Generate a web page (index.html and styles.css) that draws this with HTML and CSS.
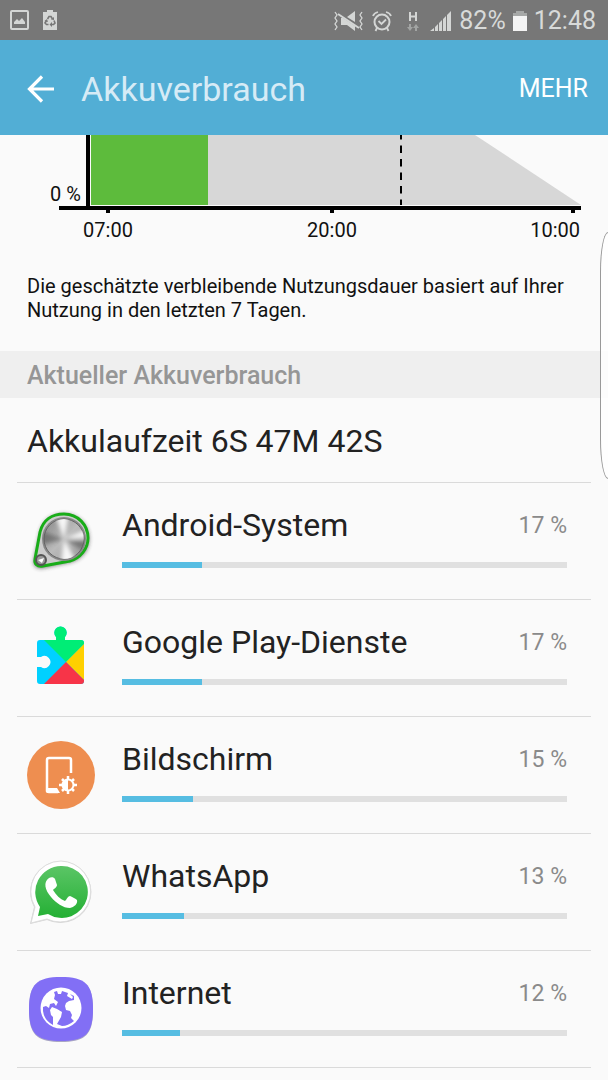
FILE: index.html
```html
<!DOCTYPE html>
<html lang="de">
<head>
    <meta charset="UTF-8">
    <meta name="viewport" content="width=device-width, initial-scale=1.0">
    <title>Akkuverbrauch</title>
    <link rel="stylesheet" href="styles.css">
</head>
<body>
    <div class="status-bar">
        <div class="status-left">
            <svg width="20" height="20" viewBox="0 0 20 20">
                <rect x="1" y="1" width="17" height="18" rx="1" fill="none" stroke="#d4d6d5" stroke-width="2"/>
                <path d="M4 14 V12 L7 9 L9 11 L12 8 L15 12 V14 Z" fill="#d4d6d5"/>
            </svg>
            <svg width="14" height="20" viewBox="0 0 14 20">
                <path d="M0 2 H4 V0 H10 V2 H14 V20 H0 Z" fill="#d4d6d5"/>
                <path d="M4.5 9 L6 6.5 H8 L9.5 9 M11 10.5 L12 13 L10.5 14.5 H8 M5.5 14.5 H3.5 L2 13 L3.5 10.5" fill="none" stroke="#777" stroke-width="1.6"/>
                <path d="M8 9.5 L11 10 L11 7 Z M9 12 V17 L6.5 14.5 Z M1.5 11 L4 9 L5 12 Z" fill="#777"/>
            </svg>
        </div>
        <div class="status-right">
            <svg width="32" height="22" viewBox="0 0 32 22">
                <path d="M2 2 L4 5 L2 8 L4 11 L2 14 L4 17 L2 20 M29 2 L27 5 L29 8 L27 11 L29 14 L27 17 L29 20" fill="none" stroke="#d4d6d5" stroke-width="1.3"/>
                <path d="M5 4 L26 18" stroke="#d4d6d5" stroke-width="2"/>
                <path d="M8 8 L10 8 L22 16 V21 L14 15 H8 Z M14 7 L22 1 V12 Z" fill="#d4d6d5"/>
            </svg>
            <svg width="20" height="22" viewBox="0 0 20 22">
                <circle cx="10" cy="12" r="7.5" fill="none" stroke="#d4d6d5" stroke-width="2"/>
                <path d="M6.5 11 L9.5 14 L14 9.5 M1 6 Q2 3 6 2 M19 6 Q18 3 14 2 M5 18 L3.5 21 M15 18 L16.5 21" fill="none" stroke="#d4d6d5" stroke-width="1.8"/>
            </svg>
            <svg class="network" width="12" height="22" viewBox="0 0 12 22">
                <path d="M3 2 V11 M9 2 V11 M3 6.5 H9" stroke="#d4d6d5" stroke-width="2" fill="none"/>
                <path d="M2 14 H4 V17 H6 L3 21 L0 17 H2 Z M8 21 H10 V18 H12 L9 14 L6 18 H8 Z" fill="#a2a4a3"/>
            </svg>
            <svg class="signal" width="22" height="22" viewBox="0 0 22 22">
                <path d="M0 21 L4 18 V21 Z M5 17 L8 14 V21 H5 Z M9 13 L12 10 V21 H9 Z M13 9 L16 6 V21 H13 Z M17 5 L21 1 V21 H17 Z" fill="#d4d6d5"/>
            </svg>
            <span class="battery-text">82%</span>
            <svg width="14" height="22" viewBox="0 0 14 22">
                <path d="M0 3 H3 V1 H11 V3 H14 V6 H0 Z" fill="#a6a8a7"/>
                <rect y="6" width="14" height="15" fill="#f4f4f4"/>
            </svg>
            <span class="clock">12:48</span>
        </div>
    </div>

    <header class="action-bar">
        <button class="back" type="button" aria-label="Zurück">
            <svg width="28" height="28" viewBox="0 0 28 28">
                <path d="M27 14 H3 M15 1.5 L2.5 14 L15 26.5" fill="none" stroke="#fff" stroke-width="3.2"/>
            </svg>
        </button>
        <h1>Akkuverbrauch</h1>
        <button class="more" type="button">MEHR</button>
    </header>

    <main>
        <svg class="chart" viewBox="0 0 608 110">
            <path d="M208 0 H475 L581 70 H208 Z" fill="#d7d7d7"/>
            <rect x="91" y="0" width="117" height="70" fill="#5dbb3c"/>
            <path d="M401 -3 V70" stroke="#000" stroke-width="2" stroke-dasharray="7.5 6"/>
            <rect x="86" y="0" width="4" height="72" fill="#000"/>
            <rect x="59" y="71" width="522" height="4" fill="#000"/>
            <path d="M106 75 h4 v3 h-4 Z M330 75 h4 v3 h-4 Z M571 75 h4 v3 h-4 Z" fill="#000"/>
            <text x="50" y="66">0 %</text>
            <text x="108" y="102" text-anchor="middle">07:00</text>
            <text x="332" y="102" text-anchor="middle">20:00</text>
            <text x="580" y="102" text-anchor="end">10:00</text>
        </svg>
        <p class="hint">Die geschätzte verbleibende Nutzungsdauer basiert auf Ihrer Nutzung in den letzten 7 Tagen.</p>

        <h2>Aktueller Akkuverbrauch</h2>
        <p class="runtime">Akkulaufzeit 6S 47M 42S</p>

        <ul class="apps">
            <li>
                <svg class="icon" width="68" height="68" viewBox="0 0 68 68">
                    <defs>
                        <linearGradient id="metal" x1="0" y1="0" x2="1" y2="1">
                            <stop offset="0" stop-color="#888"/>
                            <stop offset="0.5" stop-color="#bbb"/>
                            <stop offset="1" stop-color="#999"/>
                        </linearGradient>
                        <filter id="soft" x="-20%" y="-20%" width="140%" height="140%">
                            <feGaussianBlur stdDeviation="2"/>
                        </filter>
                        <clipPath id="knob">
                            <circle cx="37" cy="32" r="20"/>
                        </clipPath>
                    </defs>
                    <path d="M13 26 C16 13 25 7 37 7 C51 7 62 18 62 32 C62 44 54 52 44 55 L16 61 C9 62 6 58 7 53 Z" fill="#333" opacity="0.7" filter="url(#soft)"/>
                    <path d="M13 25 C16 13 25 7 37 7 C51 7 61 18 61 31 C61 42 53 51 43 54 L16 59 C10 60 7 57 8 52 Z" fill="#ccc" stroke="#18ad18" stroke-width="3"/>
                    <circle cx="37" cy="32" r="22" fill="#888"/>
                    <circle cx="37" cy="32" r="20" fill="url(#metal)" stroke="#666"/>
                    <g clip-path="url(#knob)">
                        <g filter="url(#soft)">
                            <path d="M37 32 L28 8 H42 Z M37 32 L34 56 H50 Z M37 32 L60 22 V31 Z" fill="#fff" opacity="0.9"/>
                            <path d="M37 32 L14 24 V38 Z M37 32 L60 34 V46 Z" fill="#555" opacity="0.6"/>
                        </g>
                    </g>
                    <circle cx="14" cy="53" r="5" fill="#999" stroke="#555" stroke-width="2"/>
                    <path d="M11 53 L17 51 L15 56 Z" fill="#fff"/>
                </svg>
                <div class="info">
                    <div class="line"><span class="name" id="app1">Android-System</span><span class="percent">17 %</span></div>
                    <progress value="18" max="100" aria-labelledby="app1"></progress>
                </div>
            </li>
            <li>
                <svg class="icon" width="68" height="68" viewBox="0 0 68 68">
                    <clipPath id="puzzle">
                        <path d="M13 16 H29 V13 A6.2 6.2 0 1 1 38 13 V16 H54 Q57 16 57 19 V57 Q57 60 54 60 H13 Q10 60 10 57 V43 H14 A6 6 0 1 0 14 33 H10 V19 Q10 16 13 16 Z"/>
                    </clipPath>
                    <g clip-path="url(#puzzle)">
                        <rect width="68" height="68" fill="#00d1ff"/>
                        <path d="M0 -1 H78 L39 38 Z" fill="#00ed76"/>
                        <path d="M68 9 L39 38 L68 67 Z" fill="#ffd000"/>
                        <path d="M39 38 L68 67 H10 Z" fill="#f73448"/>
                    </g>
                </svg>
                <div class="info">
                    <div class="line"><span class="name" id="app2">Google Play-Dienste</span><span class="percent">17 %</span></div>
                    <progress value="18" max="100" aria-labelledby="app2"></progress>
                </div>
            </li>
            <li>
                <svg class="icon" width="68" height="68" viewBox="0 0 68 68">
                    <circle cx="34" cy="34" r="34" fill="#ee8e50"/>
                    <path d="M44 32 V19 Q44 17 42 17 H22 Q20 17 20 19 V50 Q20 51 22 51 H31" fill="none" stroke="#fff" stroke-width="2.5"/>
                    <path d="M20 47 H30 L33 52 H22 Q20 52 20 50 Z" fill="#fff"/>
                    <circle cx="41" cy="44" r="5.5" fill="none" stroke="#fff" stroke-width="2"/>
                    <path d="M41 38 A6 6 0 0 0 41 50 Z" fill="#fff"/>
                    <path d="M41 35 V38 M41 50 V53 M32 44 H35 M47 44 H50 M35 38 L37 40 M45 48 L47 50 M35 50 L37 48 M45 40 L47 38" stroke="#fff" stroke-width="2.5"/>
                </svg>
                <div class="info">
                    <div class="line"><span class="name" id="app3">Bildschirm</span><span class="percent">15 %</span></div>
                    <progress value="16" max="100" aria-labelledby="app3"></progress>
                </div>
            </li>
            <li>
                <svg class="icon" width="68" height="68" viewBox="0 0 68 68">
                    <defs>
                        <linearGradient id="green" x1="0" y1="0" x2="0" y2="1">
                            <stop offset="0" stop-color="#5bc566"/>
                            <stop offset="1" stop-color="#24b034"/>
                        </linearGradient>
                    </defs>
                    <path d="M34 3 A31 31 0 1 1 20 62 L3 66 L7 49 A31 31 0 0 1 34 3 Z" fill="#bbb" opacity="0.6"/>
                    <path d="M34 3 A30.5 30.5 0 1 1 20 61 L4 65 L8 49 A30.5 30.5 0 0 1 34 3 Z" fill="#fff" stroke="#ddd"/>
                    <path d="M34 8 A26 26 0 1 1 21 56 L11 58 L13 49 A26 26 0 0 1 34 8 Z" fill="url(#green)"/>
                    <path d="M22 20 C24 19 27 19 28 21 L30 27 C30 29 27 31 26 32 C29 37 33 41 38 43 C40 41 41 38 43 38 C45 39 48 40 50 42 C51 46 47 49 43 50 C36 50 29 45 24 39 C18 32 16 24 22 20 Z" fill="#fff"/>
                </svg>
                <div class="info">
                    <div class="line"><span class="name" id="app4">WhatsApp</span><span class="percent">13 %</span></div>
                    <progress value="14" max="100" aria-labelledby="app4"></progress>
                </div>
            </li>
            <li>
                <svg class="icon" width="68" height="68" viewBox="0 0 68 68">
                    <path d="M34 3 C58 3 66 9 66 35 C66 60 58 67 34 67 C10 67 2 60 2 35 C2 9 10 3 34 3 Z" fill="#a9a6c4"/>
                    <path d="M34 2 C58 2 66 9 66 34 C66 59 58 66 34 66 C10 66 2 59 2 34 C2 9 10 2 34 2 Z" fill="#826ff5"/>
                    <circle cx="34" cy="33" r="20.5" fill="#fff"/>
                    <path d="M16 32 L19 31 L22 33 L23 29 L27 28 L29 31 L31 27 L27 24 L28 20 L27 17 L30 16 L31 19 L34 19 L35 16 L41 18 L40 21 L45 24 L46 22 L43 19 L47 21 L47 25 L42 26 L39 28 L38 31 L39 35 L43 36 L45 40 L44 43 L47 46 Q41 51 35 51 L30 49 L34 42 L35 37 L30 34 L25 32 L23 35 L24 40 L26 42 L26 50 Q17 45 16 36 Z" fill="#826ff5"/>
                </svg>
                <div class="info">
                    <div class="line"><span class="name" id="app5">Internet</span><span class="percent">12 %</span></div>
                    <progress value="13" max="100" aria-labelledby="app5"></progress>
                </div>
            </li>
        </ul>
    </main>

    <div class="edge-handle"></div>
</body>
</html>
```
FILE: styles.css
```css
* {
    box-sizing: border-box;
}
body {
    position: relative;
    min-height: 100vh;
    margin: 0;
    overflow-x: hidden;
    background-color: #fafafa;
    color: #222;
    font-family: Roboto, "Noto Sans", sans-serif;
}
h1, h2, p, ul {
    margin: 0;
    padding: 0;
    font-weight: 400;
}
button {
    border: 0;
    padding: 0;
    background: none;
    color: #fff;
    font-family: inherit;
}
svg {
    display: block;
    flex: none;
}

/* Statusleiste */
.status-bar {
    display: flex;
    justify-content: space-between;
    align-items: center;
    height: 40px;
    padding: 0 12px 0 10px;
    background-color: #777;
    color: #d8dad9;
    font-size: 25px;
}
.status-left {
    display: flex;
    gap: 13px;
}
.status-right {
    display: flex;
    align-items: center;
    gap: 7px;
    padding-top: 1px;
}
.network {
    margin-left: 8px;
}
.signal {
    margin-left: 4px;
}

/* Kopfzeile */
.action-bar {
    display: flex;
    align-items: center;
    height: 95px;
    padding: 2px 20px 0 27px;
    background-color: #52aed5;
}
.action-bar h1 {
    flex: 1;
    margin-left: 26px;
    color: #d6ebf6;
    font-size: 34px;
}
.more {
    font-size: 25px;
}

/* Diagramm */
.chart {
    width: 100%;
}
.chart text {
    fill: #111;
    font-size: 20px;
}
.hint {
    padding: 29px 27px;
    color: #111;
    font-size: 20px;
    line-height: 24px;
}
h2 {
    padding: 2px 27px 0;
    background-color: #efefef;
    color: #969696;
    font-size: 25px;
    font-weight: 500;
    line-height: 45px;
}
.runtime {
    margin: 0 17px;
    padding: 3px 10px 0;
    border-bottom: 1px solid #dadada;
    font-size: 32px;
    line-height: 81px;
}

/* App-Liste */
.apps {
    margin: 0 17px;
    list-style: none;
}
.apps li {
    display: flex;
    align-items: center;
    gap: 27px;
    height: 117px;
    padding: 0 24px 0 10px;
    border-bottom: 1px solid #dadada;
}
.info {
    flex: 1;
    padding-bottom: 9px;
}
.line {
    display: flex;
    justify-content: space-between;
    align-items: center;
    height: 40px;
}
.name {
    font-size: 32px;
}
.percent {
    color: #8a8a8a;
    font-size: 23px;
}
progress {
    display: block;
    width: 100%;
    height: 6px;
    margin-top: 17px;
    border: 0;
    appearance: none;
    background-color: #e0e0e0;
}
progress::-webkit-progress-bar {
    background-color: #e0e0e0;
}
progress::-webkit-progress-value {
    background-color: #56bde2;
}

/* Griff am rechten Rand */
.edge-handle {
    position: absolute;
    top: 232px;
    right: 0;
    width: 8px;
    height: 247px;
    border: 1px solid #999;
    border-right: 0;
    border-radius: 8px 0 0 8px / 40px 0 0 40px;
    background-color: rgba(255, 255, 255, 0.8);
}
```
